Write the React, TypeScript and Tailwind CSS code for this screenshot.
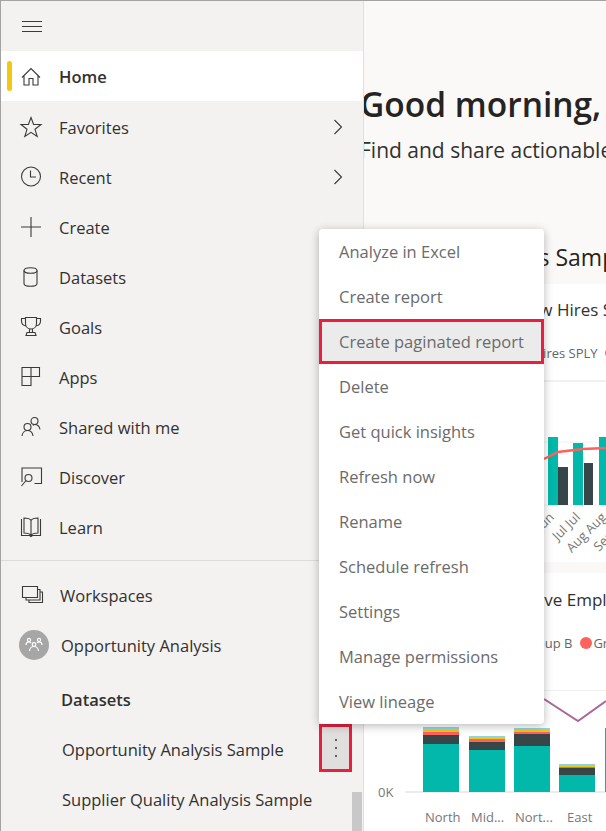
import React from 'react';

const ink = 'fill-none stroke-[#3b3a39] stroke-[1.1]';

const HomeIcon = () => (
  <svg viewBox="0 0 24 24" className={`h-6 w-6 ${ink}`}>
    <path d="M3 13.500 12 4.500l9 9M5 11.500V21h5v-6.500h4V21h5v-9.500" />
  </svg>
);
const StarIcon = () => (
  <svg viewBox="0 0 24 24" className={`h-6 w-6 ${ink}`}>
    <path d="M12 2.500l2.600 7H22l-6 4.800 2.200 7.200-6.200-4.200-6.200 4.200L8 14.300 2 9.500h7.400z" />
  </svg>
);
const ClockIcon = () => (
  <svg viewBox="0 0 24 24" className={`h-6 w-6 ${ink}`}>
    <circle cx="12" cy="11.500" r="9.500" />
    <path d="M11.500 5.500v6.500h5.500" />
  </svg>
);
const PlusIcon = () => (
  <svg viewBox="0 0 24 24" className={`h-6 w-6 ${ink}`}>
    <path d="M12 2v20M2 12h20" />
  </svg>
);
const DatasetIcon = () => (
  <svg viewBox="0 0 24 24" className={`h-6 w-6 ${ink}`}>
    <ellipse cx="11.500" cy="5.500" rx="6.500" ry="2.800" />
    <path d="M5 5.500v13c0 1.600 2.900 2.800 6.500 2.800s6.500-1.200 6.500-2.800v-13" />
  </svg>
);
const TrophyIcon = () => (
  <svg viewBox="0 0 24 24" className={`h-6 w-6 ${ink}`}>
    <path d="M6.500 2.500h11v6c0 3.200-2.400 5.500-5.500 5.500s-5.500-2.300-5.500-5.500zM6.500 3.500H2.500v2.500c0 2.500 1.800 4.500 4.500 5M17.500 3.500h4v2.500c0 2.500-1.800 4.500-4.500 5M10.500 14v3.500M13.500 14v3.500M8 17.500h8l1 3H7z" />
  </svg>
);
const AppsIcon = () => (
  <svg viewBox="0 0 24 24" className={`h-6 w-6 ${ink}`}>
    <path d="M3 2.500h17.500v9H12V20.500H3zM12 2.500v9M3 11.500h9" />
  </svg>
);
const SharedIcon = () => (
  <svg viewBox="0 0 24 24" className={`h-6 w-6 ${ink}`}>
    <circle cx="15.500" cy="6" r="3.500" />
    <circle cx="8.500" cy="12" r="3.500" />
    <path d="M3 21c.3-3 2.500-5.500 5.500-5.500s5 2.300 5.500 5.500M14 10.500c.5-.7 1-1 1.500-1 2.800 0 5 2 5.500 5" />
  </svg>
);
const DiscoverIcon = () => (
  <svg viewBox="0 0 24 24" className={`h-6 w-6 ${ink}`}>
    <path d="M3 17V3h19.500v15.500H15.500" />
    <circle cx="9.500" cy="13" r="3.500" />
    <path d="M7 15.500 2.500 21" />
  </svg>
);
const BookIcon = () => (
  <svg viewBox="0 0 24 24" className={`h-6 w-6 ${ink}`}>
    <path d="M3 4.500H2.500V20.500H10.500l1.500 1 1.500-1h8V4.500H21M12 5.500v15.500M12 5.500C11 3.800 8 3 5 3v15c3 0 6 .8 7 2.500 1-1.700 4-2.500 7-2.500V3c-3 0-6 .8-7 2.500z" />
  </svg>
);
const WorkspacesIcon = () => (
  <svg viewBox="0 0 24 24" className={`h-6 w-6 ${ink}`}>
    <path d="M2.500 3.500h15v11h-15zM17.500 6.500h2.500v10.500H6V14.500M20 9h2.500v10.500H9V17" />
  </svg>
);
const ChevronRight = () => (
  <svg viewBox="0 0 10 16" className="mr-[20px] h-4 w-[10px] fill-none stroke-[#3b3a39] stroke-[1.1]">
    <path d="M1.500 1l7 7-7 7" />
  </svg>
);
const GroupAvatar = () => (
  <div className="ml-[18px] flex h-[30px] w-[30px] shrink-0 items-center justify-center rounded-full bg-[#a6a6a6]">
    <svg viewBox="0 0 20 20" className="h-5 w-5 fill-none stroke-white stroke-[1.2]">
      <circle cx="5" cy="5" r="1.600" />
      <circle cx="15" cy="5" r="1.600" />
      <circle cx="10" cy="9.500" r="1.800" />
      <path d="M2 10c0-2 1-3 3-3 1 0 1.500.5 2 1M18 10c0-2-1-3-3-3-1 0-1.500.5-2 1M5.500 16c0-2.500 2-4.500 4.500-4.500s4.500 2 4.500 4.500" />
    </svg>
  </div>
);

const navItems = [
  { label: 'Favorites', icon: <StarIcon />, chevron: true },
  { label: 'Recent', icon: <ClockIcon />, chevron: true },
  { label: 'Create', icon: <PlusIcon /> },
  { label: 'Datasets', icon: <DatasetIcon /> },
  { label: 'Goals', icon: <TrophyIcon /> },
  { label: 'Apps', icon: <AppsIcon /> },
  { label: 'Shared with me', icon: <SharedIcon /> },
  { label: 'Discover', icon: <DiscoverIcon /> },
  { label: 'Learn', icon: <BookIcon /> },
];

const menuItems = [
  'Analyze in Excel',
  'Create report',
  'Create paginated report',
  'Delete',
  'Get quick insights',
  'Refresh now',
  'Rename',
  'Schedule refresh',
  'Settings',
  'Manage permissions',
  'View lineage',
];

const regionBars = [
  { x: 59, top: 36, teal: 48, dark: 9, red: 3 },
  { x: 105, top: 45, teal: 42, dark: 8, red: 3 },
  { x: 150, top: 37, teal: 46, dark: 12, red: 2 },
  { x: 195, top: 73, teal: 17, dark: 7, red: 1 },
];

const HiresChart = () => (
  <svg viewBox="0 0 242 180" className="h-[180px] w-[242px]">
    <path d="M0 60h242M0 123h242" className="fill-none stroke-[#f0f0f0]" />
    <rect x="184" y="55" width="10" height="68" fill="#01b8aa" />
    <rect x="194" y="85" width="10" height="38" fill="#374649" />
    <rect x="209" y="61" width="10" height="62" fill="#01b8aa" />
    <rect x="220" y="81" width="9" height="42" fill="#374649" />
    <rect x="235" y="55" width="10" height="68" fill="#01b8aa" />
    <path d="M180 77l14-7 25-3 23-1" className="fill-none stroke-[#fd625e] stroke-[2.5]" />
    <g className="fill-[#777777] text-[13px]">
      <text transform="translate(191 136) rotate(-45)" textAnchor="end">Jun</text>
      <text transform="translate(217 136) rotate(-45)" textAnchor="end">Jul Jul</text>
      <text transform="translate(243 136) rotate(-45)" textAnchor="end">Aug Aug</text>
      <text transform="translate(269 136) rotate(-45)" textAnchor="end">Sep Sep</text>
    </g>
  </svg>
);

const EmployeesChart = () => (
  <svg viewBox="0 0 242 115" className="h-[115px] w-[242px]">
    <path d="M180 8l34 22 28-20" className="fill-none stroke-[#a66999] stroke-[2]" />
    <path d="M41 101h201" className="fill-none stroke-[#ececec] stroke-[2]" />
    {regionBars.map((b) => (
      <g key={b.x}>
        <rect x={b.x} y={b.top} width="36" height={101 - b.top} fill="#8ad4eb" />
        <rect x={b.x} y={101 - b.teal - b.dark - b.red - 2} width="36" height="2" fill="#f2c80f" />
        <rect x={b.x} y={101 - b.teal - b.dark - b.red} width="36" height={b.red} fill="#fd625e" />
        <rect x={b.x} y={101 - b.teal - b.dark} width="36" height={b.dark} fill="#374649" />
        <rect x={b.x} y={101 - b.teal} width="36" height={b.teal} fill="#01b8aa" />
      </g>
    ))}
    <rect x="241" y="37" width="1" height="64" fill="#01b8aa" />
  </svg>
);

export default function App() {
  return (
    <div
      className="relative flex h-[831px] w-[606px] overflow-hidden border-t border-l border-[#a3a3a3] text-[#323130]"
      style={{ fontFamily: '"Open Sans", sans-serif' }}
    >
      <aside className="relative z-10 flex h-full w-[363px] shrink-0 flex-col overflow-hidden border-r border-[#e1e0de] bg-[#f3f2f1] text-[16.5px]">
        <div className="flex h-[50px] shrink-0 items-center pt-[1px] pl-[21px]">
          <svg viewBox="0 0 20 12" className="h-3 w-5 fill-none stroke-[#3b3a39] stroke-[1]">
            <path d="M0 .5h20M0 5.500h20M0 10.500h20" />
          </svg>
        </div>
        <div className="relative flex h-[50px] shrink-0 items-center bg-white pl-[18px] font-semibold">
          <span className="absolute top-[10px] left-[6px] h-[30px] w-[5px] rounded-full bg-[#f2c811]" />
          <HomeIcon />
          <span className="ml-4 pt-[2px]">Home</span>
        </div>
        <nav className="mt-[1px] flex flex-col">
          {navItems.map((item) => (
            <div key={item.label} className="flex h-[50px] items-center justify-between pl-[18px]">
              <div className="flex items-center gap-4">
                {item.icon}
                <span className="pt-[2px]">{item.label}</span>
              </div>
              {item.chevron && <ChevronRight />}
            </div>
          ))}
        </nav>
        <div className="mt-[8px] border-t border-[#dddcda]" />
        <div className="mt-[9px] flex h-[50px] items-center gap-4 pl-[19px]">
          <WorkspacesIcon />
          <span className="pt-[2px]">Workspaces</span>
        </div>
        <div className="flex h-[50px] items-center gap-[12px]">
          <GroupAvatar />
          <span className="pt-[2px]">Opportunity Analysis</span>
        </div>
        <div className="mt-[4px] flex h-[50px] items-center pt-[2px] pl-[60px] font-semibold">Datasets</div>
        <div className="flex h-[50px] items-center justify-between pl-[61px]">
          <span className="pt-[2px]">Opportunity Analysis Sample</span>
          <button className="mr-[11px] mb-[2px] flex h-[48px] w-[33px] flex-col items-center justify-center gap-[6px] border-[3px] border-[#e81f3e] bg-[#e1dfdd]">
            <span className="h-[2px] w-[2px] rounded-full bg-[#323130]" />
            <span className="h-[2px] w-[2px] rounded-full bg-[#323130]" />
            <span className="h-[2px] w-[2px] rounded-full bg-[#323130]" />
          </button>
        </div>
        <div className="flex h-[50px] items-center pt-[2px] pl-[61px]">Supplier Quality Analysis Sample</div>
        <span className="absolute right-[1px] bottom-0 h-[39px] w-[10px] bg-[#c8c8c8]" />
      </aside>

      <main className="min-w-0 flex-1 overflow-hidden bg-[#faf9f8]">
        <div className="-ml-[4px] w-[600px]">
          <h1 className="mt-[81px] text-[33.5px] leading-[44px] font-semibold whitespace-nowrap text-[#252423]">Good morning, Alex</h1>
          <p className="mt-[10px] text-[21px] leading-[28px] whitespace-nowrap">Find and share actionable insights</p>
        </div>
        <h2 className="mt-[78px] ml-[99px] text-[23px] leading-[30px] font-medium whitespace-nowrap text-[#252423]">Analysis Sample</h2>
        <section className="mt-[12px] h-[278px] bg-white">
          <h3 className="ml-[153px] pt-[12px] text-[17px] leading-[28px] font-medium whitespace-nowrap">New Hires SPLY</h3>
          <div className="mt-[19px] ml-[139px] flex items-center gap-[7px] text-[13px] leading-[20px] whitespace-nowrap text-[#666666]">
            <span>New Hires SPLY</span>
            <span className="h-[10px] w-[10px] shrink-0 rounded-full bg-[#fd625e]" />
          </div>
          <div className="mt-[17px] border-t-2 border-[#f0f0f0]">
            <HiresChart />
          </div>
        </section>
        <section className="mt-[11px] h-[258px] bg-white">
          <h3 className="ml-[151px] pt-[13px] text-[17px] leading-[28px] font-medium whitespace-nowrap">Active Employees</h3>
          <div className="mt-[19px] ml-[100px] flex items-center gap-[8px] text-[13px] leading-[20px] whitespace-nowrap text-[#666666]">
            <span>Group A</span>
            <span>Group B</span>
            <span className="-mr-[7px] h-[12px] w-[12px] shrink-0 rounded-full bg-[#fd625e]" />
            <span>Group C</span>
          </div>
          <div className="relative mt-[37px] border-t border-[#f0f0f0]">
            <EmployeesChart />
            <span className="absolute top-[91px] left-[14px] text-[13px] leading-[20px] text-[#777777]">0K</span>
            <div className="flex pt-[1px] text-[13px] leading-[20px] whitespace-nowrap text-[#777777]">
              <span className="ml-[61px] w-[46px]">North</span>
              <span className="w-[44px]">Mid...</span>
              <span className="w-[52px]">Nort...</span>
              <span>East</span>
            </div>
          </div>
        </section>
      </main>

      <ul className="absolute top-[228px] left-[318px] z-20 w-[225px] rounded bg-white text-[16.5px] text-[#6b6b6b] shadow-[0_2px_10px_rgba(0,0,0,0.28)]">
        {menuItems.map((item) => (
          <li
            key={item}
            className={
              item === 'Create paginated report'
                ? 'flex h-[45px] items-center border-[3px] border-[#e81f3e] bg-[#ebebeb] pt-[2px] pl-[17px]'
                : 'flex h-[45px] items-center pt-[2px] pl-5'
            }
          >
            {item}
          </li>
        ))}
      </ul>
    </div>
  );
}
